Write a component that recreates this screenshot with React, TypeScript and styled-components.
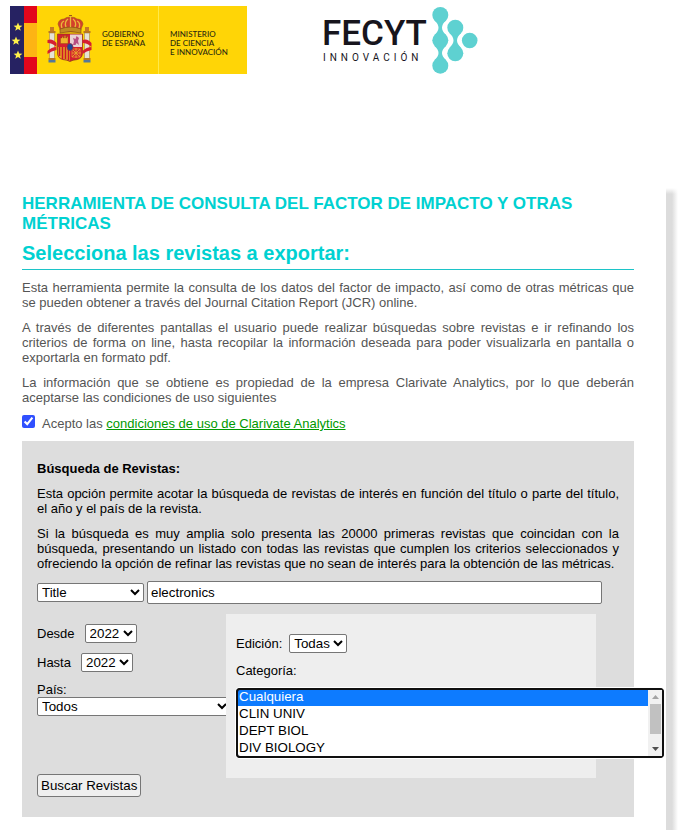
import React from "react";
import styled, { createGlobalStyle } from "styled-components";

const GlobalStyle = createGlobalStyle`
  *, *::before, *::after { box-sizing: border-box; }
  body {
    margin: 0;
    background: #fff;
    color: #000;
    font: 13px/15px "Liberation Sans", Arial, sans-serif;
  }
  select, input, button { font-family: "Liberation Sans", Arial, sans-serif; }
`;

const Page = styled.div`
  display: flex;
  flex-direction: column;
  min-height: 100vh;
`;

const Header = styled.header`
  display: flex;
  align-items: flex-start;
  gap: 73px;
  padding: 6px 10px 0;
  height: 186px;
`;

const Logo = styled.svg`
  display: block;
  flex: none;
`;

const Government = styled.div`
  display: flex;
  flex: none;
  width: 237px;
  height: 68px;
  background: #ffd506;
`;

const LogoText = styled.span<{ $divided?: boolean }>`
  padding: 24px 0 0 11px;
  border-left: ${(p) => (p.$divided ? "1px solid #ffe94a" : "0")};
  color: #2b2a10;
  font: 500 8px/9px Lato, sans-serif;
  white-space: nowrap;
`;

const GovernmentName = styled(LogoText)`
  width: 64px;
  padding-left: 8px;
`;

const Body = styled.div`
  display: flex;
  flex: 1;
  padding-right: 19px;
`;

const Main = styled.main`
  flex: 1;
  min-width: 0;
  padding: 8px 32px 13px 22px;
`;

const Edge = styled.div`
  width: 12px;
  background:
    linear-gradient(#fff 2px, transparent 8px),
    linear-gradient(90deg, #dcdcdc 50%, #fff);
`;

const Title = styled.h1`
  margin: 0;
  color: #00d1d1;
  font-size: 17px;
  line-height: 20px;
`;

const Subtitle = styled.h2`
  margin: 7px 0 10px;
  padding-bottom: 4px;
  border-bottom: 1px solid #1cc4c8;
  color: #00d1d1;
  font-size: 20px;
  line-height: 24px;
`;

const Text = styled.p<{ $muted?: boolean }>`
  margin: 0 0 10px;
  color: ${(p) => (p.$muted ? "#555" : "#000")};
  text-align: justify;
`;

const Terms = styled.div`
  display: flex;
  align-items: flex-start;
  gap: 7px;
  margin-bottom: 8px;
  color: #555;
  line-height: 18px;
`;

const Tick = styled.input`
  width: 13px;
  height: 13px;
  margin: 0;
  accent-color: #3050ff;
`;

const Link = styled.a`
  color: #090;
`;

const Search = styled.form`
  padding: 20px 15px;
  background: #ddd;
`;

const SearchTitle = styled.h3`
  margin: 0 0 10px;
  font-size: 13px;
  line-height: 15px;
`;

const Query = styled.div`
  display: flex;
  align-items: center;
  gap: 3px;
  margin: 0 17px 10px 0;
`;

const Select = styled.select<{ $width: number }>`
  width: ${(p) => p.$width}px;
  height: 19px;
  margin: 0;
  padding: 0;
  border: 1px solid #767676;
  border-radius: 2px;
  background: #fff;
  color: #000;
`;

const QueryInput = styled.input`
  flex: 1;
  min-width: 0;
  height: 23px;
  padding: 0 3px;
  border: 1px solid #767676;
  border-radius: 2px;
  color: #000;
`;

const Filters = styled.div`
  display: grid;
  grid-template-columns: 189px minmax(0, 1fr);
  align-items: start;
  margin-right: 23px;
`;

const Period = styled.div`
  display: flex;
  flex-direction: column;
  align-items: flex-start;
  gap: 10px;
  padding-top: 10px;
`;

const Field = styled.div<{ $gap: number }>`
  display: flex;
  align-items: center;
  gap: ${(p) => p.$gap}px;
`;

const Country = styled.div`
  display: flex;
  flex-direction: column;
`;

const Submit = styled.button`
  height: 23px;
  margin-top: 48px;
  padding: 0 3px;
  border: 1px solid #767676;
  border-radius: 3px;
  background: #efefef;
  color: #000;
`;

const Category = styled.div`
  position: relative;
  display: flex;
  flex-direction: column;
  align-items: flex-start;
  gap: 10px;
  padding: 20px 10px;
  background: #eee;
`;

const ListWrap = styled.div`
  position: relative;
  width: 428px;
`;

const List = styled.select`
  display: block;
  width: 100%;
  height: 70px;
  margin: 0;
  padding: 0;
  overflow: hidden;
  border: 1px solid #101010;
  border-radius: 4px;
  outline: 2px solid #101010;
  outline-offset: -2px;
  box-shadow: 0 0 0 1px #fff;
  background: #fff;
  color: #000;
`;

const Option = styled.option`
  height: 17px;
  min-height: 17px;
  padding: 0 2px 1px;
  line-height: 16px;
  &:checked {
    background: #0d7bff linear-gradient(#0d7bff, #0d7bff);
    color: #fff;
  }
`;

const ScrollBar = styled.svg`
  position: absolute;
  top: 2px;
  right: 2px;
`;

function Flags() {
  return (
    <Logo width="27" height="68" viewBox="0 0 27 68" aria-hidden="true">
      <rect width="14" height="68" fill="#262262" />
      <rect x="14" width="13" height="68" fill="#e3061c" />
      <rect x="14" y="17" width="13" height="34" fill="#fdb414" />
      <g fill="#fff04a">
        {[[8, 21], [6, 35], [8, 49]].map(([x, y]) => (
          <path
            key={y}
            transform={`translate(${x} ${y})`}
            d="M0-4.5 1.2-1.4 4.4-1.3 1.9.7 2.8 3.8 0 2-2.8 3.8-1.9.7-4.4-1.3-1.2-1.4Z"
          />
        ))}
      </g>
    </Logo>
  );
}

function CoatOfArms() {
  return (
    <Logo width="57" height="68" viewBox="37 6 57 68" role="img" aria-label="Escudo de España">
      <path d="M61 32 58 24q1-5 6-5 2-2 6.500-2t6.500 2q5 0 6 5l-3 8Z" fill="#d3402b" stroke="#9c5a1c" strokeWidth=".6" />
      <path d="M60 29q10.500-4 21 0v4q-10.500-3-21 0Z" fill="#c08a22" stroke="#7c4a12" strokeWidth=".6" />
      <path d="M62 28q-2-5 2-7M66 27q-2-5 2-8M70.500 27V15M75 27q2-5-2-8M79 28q2-5-2-7" fill="none" stroke="#e9b93a" strokeWidth="1.300" />
      <path d="M69 15.500h3" stroke="#9c5a1c" />
      <path d="M57.500 34h25v19q0 5-5 6.500-5 .5-7.500 2-2.500-1.500-7.500-2-5-1.500-5-6.500Z" fill="#d4202f" stroke="#8a3a1c" strokeWidth=".7" />
      <path d="M70 34.500h12V47H70Z" fill="#ead4d4" />
      <path d="M70 47v13.500q-2-1-7-1.500-5-1-5-6v-6Z" fill="#e5ad20" />
      <path d="M59.500 47v9M62.500 47v12M65.500 47v12M68.500 47v13" stroke="#cf1728" strokeWidth="1.600" />
      <path d="M60.500 43.500V38h1.500v-1.500h1.300V38h1v-2.500h1.400V38h1v-1.500H68V43.500Z" fill="#efb42b" stroke="#8c4515" strokeWidth=".4" />
      <path d="m73 45 1-4-1-3 2.500 1 1-3 2.500 2-1 3 1 4-2.500-2-1 2Z" fill="#b84f82" />
      <path d="m72 49 8 8m0-8-8 8m4-9v10m-4-5h9" stroke="#e9a52d" strokeWidth=".9" />
      <path d="M72 49h8v8h-8Z" fill="none" stroke="#e9a52d" strokeWidth=".7" />
      <ellipse cx="70" cy="47" rx="3" ry="3.500" fill="#1c4a94" stroke="#8f2b4a" strokeWidth=".8" />
      {[51.5, 86.5].map((x) => (
        <g key={x}>
          <path d={`M${x - 2} 33h5v26h-5Z`} fill="#e6e2d4" stroke="#a38554" strokeWidth=".6" />
          <path d={`M${x - 3} 31h7v2h-7ZM${x - 3} 58h7v2h-7Z`} fill="#b97720" />
          <path d={`M${x - 3} 60h7v2.500h-7Z`} fill="#55789a" />
          <path d={`M${x - 1.5} 31v-4h4v4Z`} fill="#c47b24" />
          <path d={`M${x - 4} 40q5-2 9 3v4q-4-4-9-4ZM${x - 4} 51q4-4 9-4v3q-5 1-9 4Z`} fill="#d61e31" />
        </g>
      ))}
    </Logo>
  );
}

function Fecyt() {
  return (
    <Logo width="160" height="70" viewBox="320 6 160 70" role="img" aria-label="FECYT Innovación">
      <text x="322" y="45" fill="#17151d" fontFamily="Roboto, sans-serif" fontWeight="500" fontSize="35">FECYT</text>
      <text x="323" y="61" fill="#17151d" fontFamily="Roboto, sans-serif" fontSize="10" letterSpacing="4">INNOVACIÓN</text>
      <g fill="#5ed1d1">
        <circle cx="440.300" cy="15" r="8" />
        <circle cx="440.300" cy="40.300" r="8" />
        <circle cx="440.300" cy="65.700" r="8" />
        <circle cx="455.300" cy="27.700" r="8" />
        <circle cx="455.300" cy="53.300" r="8" />
        <circle cx="469.700" cy="40.500" r="7.800" />
        <path d="M434.500 20.500Q442.500 27.700 434.500 35H446Q438 27.700 446 20.500Z" />
        <path d="M434.500 46Q442.500 53 434.500 60H446Q438 53 446 46Z" />
        <path d="M449.500 33.300Q457.500 40.500 449.500 47.700H461Q453 40.500 461 33.300Z" />
      </g>
    </Logo>
  );
}

const categories = ["Cualquiera", "CLIN UNIV", "DEPT BIOL", "DIV BIOLOGY"];

export default function App() {
  return (
    <Page>
      <GlobalStyle />
      <Header>
        <Government>
          <Flags />
          <CoatOfArms />
          <GovernmentName>GOBIERNO<br />DE ESPAÑA</GovernmentName>
          <LogoText $divided>MINISTERIO<br />DE CIENCIA<br />E INNOVACIÓN</LogoText>
        </Government>
        <Fecyt />
      </Header>
      <Body>
        <Main>
          <Title>HERRAMIENTA DE CONSULTA DEL FACTOR DE IMPACTO Y OTRAS MÉTRICAS</Title>
          <Subtitle>Selecciona las revistas a exportar:</Subtitle>
          <Text $muted>
            Esta herramienta permite la consulta de los datos del factor de impacto, así como de otras métricas que se pueden obtener a través del Journal Citation Report (JCR) online.
          </Text>
          <Text $muted>
            A través de diferentes pantallas el usuario puede realizar búsquedas sobre revistas e ir refinando los criterios de forma on line, hasta recopilar la información deseada para poder visualizarla en pantalla o exportarla en formato pdf.
          </Text>
          <Text $muted>
            La información que se obtiene es propiedad de la empresa Clarivate Analytics, por lo que deberán aceptarse las condiciones de uso siguientes
          </Text>
          <Terms>
            <Tick id="terms" type="checkbox" defaultChecked />
            <label htmlFor="terms">
              Acepto las <Link href="#condiciones">condiciones de uso de Clarivate Analytics</Link>
            </label>
          </Terms>
          <Search onSubmit={(e) => e.preventDefault()}>
            <SearchTitle>Búsqueda de Revistas:</SearchTitle>
            <Text>
              Esta opción permite acotar la búsqueda de revistas de interés en función del título o parte del título, el año y el país de la revista.
            </Text>
            <Text>
              Si la búsqueda es muy amplia solo presenta las 20000 primeras revistas que coincidan con la búsqueda, presentando un listado con todas las revistas que cumplen los criterios seleccionados y ofreciendo la opción de refinar las revistas que no sean de interés para la obtención de las métricas.
            </Text>
            <Query>
              <Select $width={107} aria-label="Campo de búsqueda"><option>Title</option></Select>
              <QueryInput type="text" aria-label="Texto de búsqueda" defaultValue="electronics" />
            </Query>
            <Filters>
              <Period>
                <Field $gap={10}>
                  <label htmlFor="from">Desde</label>
                  <Select id="from" $width={52}><option>2022</option></Select>
                </Field>
                <Field $gap={10}>
                  <label htmlFor="to">Hasta</label>
                  <Select id="to" $width={52}><option>2022</option></Select>
                </Field>
                <Country>
                  <label htmlFor="country">País:</label>
                  <Select id="country" $width={194}><option>Todos</option></Select>
                </Country>
                <Submit type="submit">Buscar Revistas</Submit>
              </Period>
              <Category>
                <Field $gap={7}>
                  <label htmlFor="edition">Edición:</label>
                  <Select id="edition" $width={58}><option>Todas</option></Select>
                </Field>
                <label htmlFor="category">Categoría:</label>
                <ListWrap>
                  <List id="category" multiple size={4} defaultValue={["Cualquiera"]}>
                    {categories.map((c) => <Option key={c} value={c}>{c}</Option>)}
                  </List>
                  <ScrollBar width="14" height="66" viewBox="0 0 14 66" aria-hidden="true">
                    <rect width="14" height="66" fill="#f1f1f1" />
                    <rect x="2" y="14" width="11" height="30" fill="#c1c1c1" />
                    <path d="M4 9h7L7.500 5Z" fill="#a3a3a3" />
                    <path d="M4 57h7l-3.500 4Z" fill="#505050" />
                  </ScrollBar>
                </ListWrap>
              </Category>
            </Filters>
          </Search>
        </Main>
        <Edge />
      </Body>
    </Page>
  );
}
